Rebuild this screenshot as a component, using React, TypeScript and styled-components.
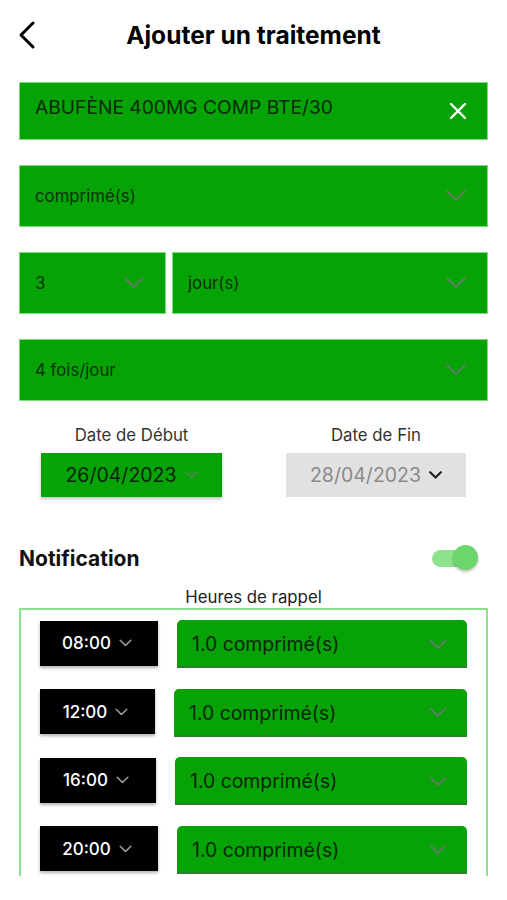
import React from "react";
import styled, { createGlobalStyle } from "styled-components";

const Global = createGlobalStyle`
  html, body { margin: 0; padding: 0; background: #fff; }
  body { font-family: "Inter", "Liberation Sans", sans-serif; color: #000; }
`;

const GREEN = "#05a305";
const BORDER = "#7ddc7d";
const DARK = "#0b300b";
const CHEV = "#5c7f5c";

const Screen = styled.div`
  width: 507px;
  height: 876px;
  overflow: hidden;
  display: flex;
  flex-direction: column;
`;

const Header = styled.div`
  height: 70px;
  flex: none;
  display: flex;
  align-items: center;
  position: relative;
  justify-content: center;
`;

const Back = styled.button`
  position: absolute;
  left: 12px;
  top: 18px;
  border: 0;
  background: none;
  padding: 0;
  width: 30px;
  height: 34px;
  display: flex;
  align-items: center;
  justify-content: center;
`;

const Title = styled.h1`
  margin: 0;
  font-size: 24.5px;
  font-weight: 700;
`;

const Form = styled.div`
  padding: 12px 19px 0;
  display: flex;
  flex-direction: column;
  flex: none;
`;

const Field = styled.div<{ $h: number; $mb: number; $w?: string }>`
  height: ${(p) => p.$h}px;
  margin-bottom: ${(p) => p.$mb}px;
  flex: ${(p) => p.$w ?? "none"};
  background: ${GREEN};
  border: 1px solid ${BORDER};
  box-sizing: border-box;
  display: flex;
  align-items: center;
  justify-content: space-between;
  padding: 0 20px 0 15px;
  color: ${DARK};
  font-size: 16.8px;
`;

const DrugText = styled.span`
  font-size: 19.2px;
  color: #0a2a0a;
  margin-top: -8px;
`;

const Row = styled.div`
  display: flex;
  gap: 6px;
  flex: none;
`;

const DateRow = styled.div`
  display: flex;
  justify-content: center;
  gap: 64px;
  margin: 24px -19px 0;
`;

const DateCol = styled.div`
  display: flex;
  flex-direction: column;
  align-items: center;
`;

const DateLabel = styled.div`
  font-size: 16.8px;
  color: #333;
  margin-bottom: 8px;
  line-height: 20px;
`;

const DateBox = styled.div<{ $active?: boolean }>`
  width: ${(p) => (p.$active ? 181 : 180)}px;
  height: 44px;
  box-sizing: border-box;
  display: flex;
  align-items: center;
  justify-content: center;
  gap: 8px;
  font-size: 19.5px;
  background: ${(p) => (p.$active ? GREEN : "#e1e1e1")};
  color: ${(p) => (p.$active ? "#0a200a" : "#8a8a8a")};
  box-shadow: ${(p) => (p.$active ? "0 2px 3px rgba(0,0,0,0.25)" : "none")};
`;

const NotifRow = styled.div`
  display: flex;
  justify-content: space-between;
  align-items: center;
  margin-top: 47px;
  height: 28px;
  padding-right: 10px;
`;

const NotifTitle = styled.div`
  font-size: 21px;
  font-weight: 700;
  color: #111;
`;

const Toggle = styled.div`
  position: relative;
  width: 46px;
  height: 26px;
  display: flex;
  align-items: center;
`;

const Track = styled.div`
  width: 38px;
  height: 17px;
  border-radius: 9px;
  background: #8ee28e;
`;

const Knob = styled.div`
  position: absolute;
  right: 0;
  top: 0;
  width: 25px;
  height: 25px;
  border-radius: 50%;
  background: #6bd66b;
  box-shadow: 0 2px 3px rgba(0, 0, 0, 0.25);
`;

const SubTitle = styled.div`
  text-align: center;
  font-size: 16.8px;
  color: #222;
  margin-top: 15px;
  line-height: 20px;
`;

const ReminderBox = styled.div`
  border: 2px solid #8ee08e;
  border-bottom: 0;
  margin-top: 1px;
  padding: 10px 19px 0;
  display: flex;
  flex-direction: column;
  gap: 22.5px;
  height: 400px;
`;

const ReminderRow = styled.div`
  display: flex;
  align-items: center;
  justify-content: space-between;
  height: 46px;
  flex: none;
`;

const TimeBox = styled.div<{ $w: number }>`
  width: ${(p) => p.$w}px;
  height: 45px;
  box-sizing: border-box;
  background: #000;
  color: #fff;
  font-size: 17px;
  font-weight: 500;
  display: flex;
  align-items: center;
  justify-content: center;
  gap: 8px;
  box-shadow: 0 2px 3px rgba(0, 0, 0, 0.3);
  padding-right: 4px;
`;

const DoseBox = styled.div<{ $w: number }>`
  width: ${(p) => p.$w}px;
  height: 48px;
  margin-top: 2px;
  box-sizing: border-box;
  background: ${GREEN};
  border-radius: 5px 5px 0 0;
  border-bottom: 2px solid #2f7d2f;
  display: flex;
  align-items: center;
  justify-content: space-between;
  padding: 2px 20px 0 15px;
  font-size: 19.4px;
  color: #0a250a;
`;

const Chevron = ({ color, size = 22, sw = 2.2 }: { color: string; size?: number; sw?: number }) => (
  <svg width={size} height={size * 0.6} viewBox="0 0 22 13" fill="none">
    <path d="M2 2 L11 11 L20 2" stroke={color} strokeWidth={sw * (22 / size)} strokeLinecap="round" strokeLinejoin="round" />
  </svg>
);

const reminders = [
  { t: "08:00", tw: 118, dw: 290 },
  { t: "12:00", tw: 115, dw: 293 },
  { t: "16:00", tw: 116, dw: 292 },
  { t: "20:00", tw: 118, dw: 290 },
];

export default function App() {
  return (
    <>
      <Global />
      <Screen>
        <Header>
          <Back aria-label="Retour">
            <svg width="20" height="30" viewBox="0 0 20 30" fill="none">
              <path d="M16 3 L4 15 L16 27" stroke="#000" strokeWidth="3" strokeLinecap="round" strokeLinejoin="round" />
            </svg>
          </Back>
          <Title>Ajouter un traitement</Title>
        </Header>
        <Form>
          <Field $h={58} $mb={25}>
            <DrugText>ABUFÈNE 400MG COMP BTE/30</DrugText>
            <svg width="18" height="18" viewBox="0 0 18 18">
              <path d="M2 2 L16 16 M16 2 L2 16" stroke="#fff" strokeWidth="2.4" strokeLinecap="round" />
            </svg>
          </Field>
          <Field $h={62} $mb={25}>
            <span>comprimé(s)</span>
            <Chevron color={CHEV} />
          </Field>
          <Row>
            <Field $h={62} $mb={25} $w="0 0 147px">
              <span>3</span>
              <Chevron color={CHEV} />
            </Field>
            <Field $h={62} $mb={25} $w="1">
              <span>jour(s)</span>
              <Chevron color={CHEV} />
            </Field>
          </Row>
          <Field $h={62} $mb={0}>
            <span>4 fois/jour</span>
            <Chevron color={CHEV} />
          </Field>
          <DateRow>
            <DateCol>
              <DateLabel>Date de Début</DateLabel>
              <DateBox $active>
                <span>26/04/2023</span>
                <Chevron color={CHEV} size={13} sw={1.5} />
              </DateBox>
            </DateCol>
            <DateCol>
              <DateLabel>Date de Fin</DateLabel>
              <DateBox>
                <span>28/04/2023</span>
                <Chevron color="#222" size={13} sw={2.2} />
              </DateBox>
            </DateCol>
          </DateRow>
          <NotifRow>
            <NotifTitle>Notification</NotifTitle>
            <Toggle>
              <Track />
              <Knob />
            </Toggle>
          </NotifRow>
          <SubTitle>Heures de rappel</SubTitle>
          <ReminderBox>
            {reminders.map((r) => (
              <ReminderRow key={r.t}>
                <TimeBox $w={r.tw}>
                  <span>{r.t}</span>
                  <Chevron color="#9a9a9a" size={13} sw={1.6} />
                </TimeBox>
                <DoseBox $w={r.dw}>
                  <span>1.0 comprimé(s)</span>
                  <Chevron color={CHEV} size={18} sw={2.2} />
                </DoseBox>
              </ReminderRow>
            ))}
          </ReminderBox>
        </Form>
      </Screen>
    </>
  );
}
